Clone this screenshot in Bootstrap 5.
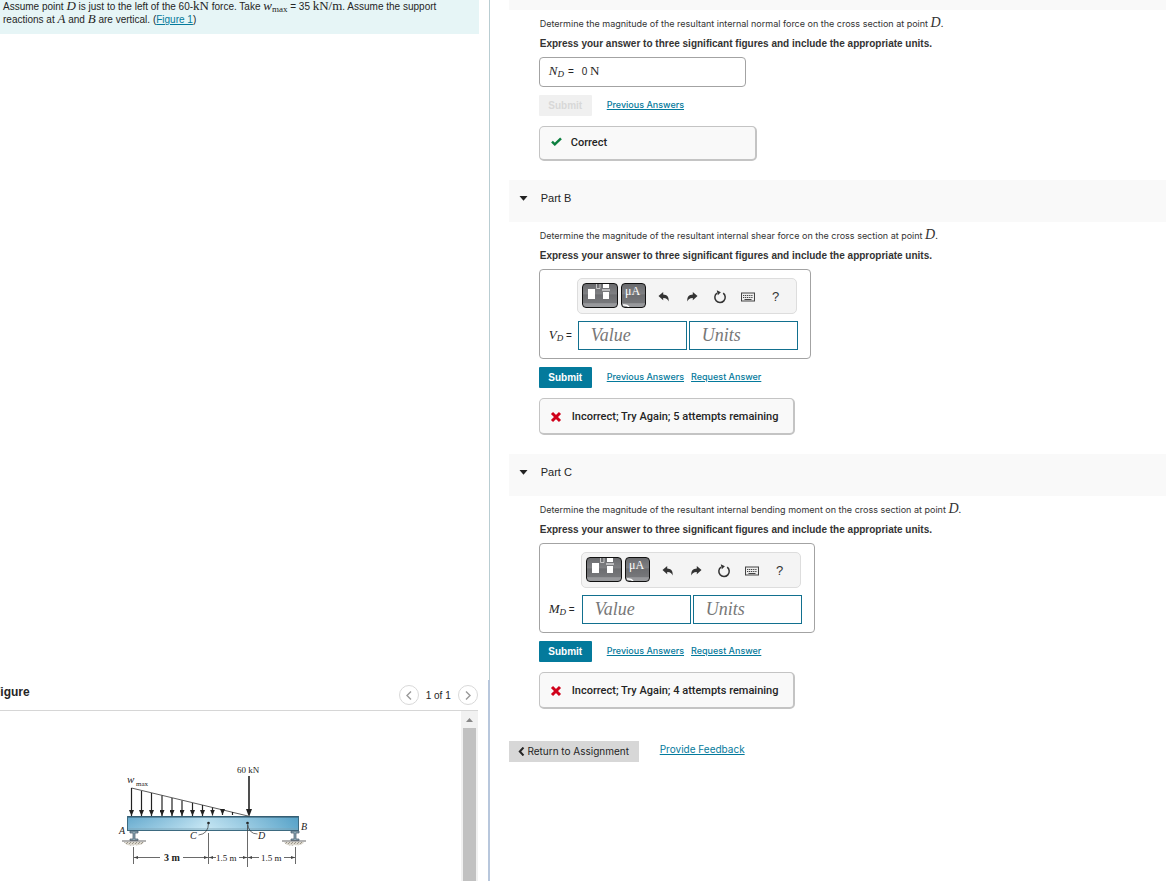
<!DOCTYPE html>
<html lang="en">
<head>
<meta charset="utf-8">
<meta name="viewport" content="width=device-width, initial-scale=1">
<title>Internal Loadings Assignment</title>
<link href="https://cdn.jsdelivr.net/npm/bootstrap@5.3.0/dist/css/bootstrap.min.css" rel="stylesheet">
<style>
  body { font-family: "Liberation Sans", Arial, sans-serif; font-size: 10px; color: #252525; background: #fff; }
  a { color: #047a9c; }
  .math { font-family: "Liberation Serif", "Times New Roman", serif; font-size: 13px; line-height: 0; }
  .math sub { font-size: 9px; bottom: -2px; }

  .left-pane { width: 42%; }
  .problem { background: #e6f5f6; line-height: 13px; padding: 0 0 8px 3px; margin-right: 10px; }
  .pane-edge { border-right: 1px solid #b9cdd2; }
  .figure-panel { border-right: 2px solid #b8c7dc; }
  .figure-head { height: 30px; padding-right: 10px; }
  .figure-title { font-size: 12px; font-weight: 700; margin: 0 0 7px -7px; line-height: 16px; }
  .pager { gap: 7px; }
  .pager-btn { width: 20px; height: 20px; border: 1px solid #d9d9d9; border-radius: 50%; background: #fff; color: #999; padding: 0; }
  .figure-body { height: 171px; border-top: 1px solid #d6d6d6; margin-right: 10px; overflow: hidden; }
  .beam-drawing { margin: 44px 0 0 100px; flex: none; }
  .scroll-track { width: 17px; background: #f1f1f1; }
  .scroll-thumb { width: 13px; background: #c1c1c1; }
  .scroll-arrow { height: 17px; }

  .right-pane { padding-left: 19px; }
  .part-head { background: #f9f9f9; height: 42px; font-size: 11px; padding: 0 0 5px 10px; margin: 0; font-weight: 400; gap: 13px; }
  .part-head.cut { height: 10px; }
  .part-body { padding: 4px 0 19px 30px; }
  .question { font-family: Inter, "Liberation Sans", sans-serif; font-size: 9px; line-height: 20px; height: 20px; margin: 0 0 0 1px; white-space: nowrap; color: #333; }
  .question .math { font-size: 14px; }
  .instruct { font-weight: 700; line-height: 20px; margin: 0 0 3px 1px; color: #333; }
  .frame { border: 1px solid #a3a3a3; border-radius: 4px; background: #fff; }
  .frame.done { width: 207px; height: 30px; padding: 0 0 2px 9px; gap: 4px; }
  .frame.entry { width: fit-content; padding: 8px 12px 8px 9px; gap: 7px; }
  .row-label { width: 29px; }
  .row-label.wide { width: 33px; }
  .toolbar { width: 220px; height: 36px; border: 1px solid #ddd; border-radius: 5px; background: #f4f4f4; padding: 0 0 2px 4px; gap: 3px; align-self: flex-end; margin-right: 1px; }
  .key-btn { height: 25px; border: 1px solid #111; border-radius: 4px; color: #fff; padding: 0; overflow: hidden;
    background: linear-gradient(#6a6b6e 0, #808184 45%, #6c6d70 46%, #77787b 84%, #98999c 85%); }
  .key-btn svg { display: block; }
  .tools { margin-left: 1px; }
  .tool-btn { width: 28px; height: 28px; border: 0; background: none; padding: 3px 0 0; color: #333; font-size: 13px; }
  .answer-box { width: 109px; height: 29px; border: 1px solid #12708f; border-radius: 0; padding: 0 12px; background: #fff;
    font-family: "Liberation Serif", "Times New Roman", serif; font-size: 18px; font-style: italic; }
  .answer-box::placeholder { color: #777; opacity: 1; }
  .units-box { margin-left: 2px; }
  .actions { margin: 8px 0 10px; }
  .actions a { font-family: Inter, "Liberation Sans", sans-serif; font-size: 9px; font-weight: 500; margin: 0 7px 2px 0; }
  .submit-btn { width: 53px; height: 21px; border: 0; border-radius: 1px; background: #047a9c; color: #fff; font-weight: 700; padding: 0; margin-right: 15px; }
  .submit-btn:disabled { background: #f0f0f0; color: #d8d8d8; }
  .feedback { width: 256px; height: 37px; border: 1px solid #c4c4c4; border-width: 1px 2px 2px 1px; border-radius: 5px; background: #f9f9f9;
    font-family: Roboto, "Liberation Sans", sans-serif; font-size: 11px; font-weight: 500; padding: 2px 0 0 10px; gap: 10px; }
  .feedback.right { width: 218px; height: 35px; padding: 0 0 0 11px; gap: 9px; }
  .page-foot { margin-top: 13px; gap: 21px; font-family: Inter, "Liberation Sans", sans-serif; }
  .return-btn { width: 130px; height: 21px; border: 0; background: #d7d7d7; color: #252525; padding: 0; gap: 2px; }
</style>
</head>
<body>
<svg width="0" height="0" class="position-absolute" aria-hidden="true">
  <defs>
    <symbol id="undo" viewBox="0 0 12 12"><path d="M.5 5 5.200 1v2.400C9 3.500 11.200 5.500 10.600 10.500 9.700 8 8.200 6.800 5.200 6.900v2.300z" fill="currentColor"/></symbol>
    <symbol id="reset" viewBox="0 0 14 14"><path d="M4 3.100A5.200 5.200 0 1 0 10.200 3.200" fill="none" stroke="currentColor" stroke-width="1.500"/><path d="M3.800 .3 7.900 2.200 4.800 5.300z" fill="currentColor"/></symbol>
    <symbol id="keys" viewBox="0 0 14 10"><rect x=".5" y="1" width="13" height="8" fill="#eee" stroke="#444"/><path d="M2 3.500h10M2 5.500h10" stroke="#444" stroke-dasharray="1.200 .7"/><path d="M3.500 7.500h7" stroke="#444"/></symbol>
    <symbol id="cross" viewBox="0 0 12 12"><path d="M2 2 10 10M10 2 2 10" stroke="#d0021b" stroke-width="3"/></symbol>
    <symbol id="template" viewBox="0 0 34 23"><path d="M5 5h7v10H5zM20 8h6v7h-6zM19 5.500h8v1h-8zM20 0h6v4h-6z" fill="#fff"/><path d="M13.500 0v4.500h3.500V0" fill="none" stroke="#ddd" stroke-width=".8"/></symbol>
    <symbol id="caret" viewBox="0 0 8 5"><path d="M0 0h8L4 4.700z" fill="#222"/></symbol>
  </defs>
</svg>

<div class="d-flex min-vh-100">
  <aside class="left-pane d-flex flex-column flex-shrink-0 overflow-hidden">
    <div class="pane-edge flex-grow-1">
      <div class="problem">
        Assume point <i class="math">D</i> is just to the left of the 60-<span class="math">kN</span> force. Take <span class="math"><i>w</i><sub>max</sub></span> = 35 <span class="math">kN/m</span>. Assume the support<br>
        reactions at <i class="math">A</i> and <i class="math">B</i> are vertical. (<a href="#figure">Figure 1</a>)
      </div>
    </div>
    <section class="figure-panel" id="figure">
      <div class="figure-head d-flex justify-content-between align-items-center">
        <h2 class="figure-title">Figure</h2>
        <div class="pager d-flex align-items-center">
          <button class="pager-btn d-flex align-items-center justify-content-center" type="button" aria-label="Previous figure"><svg width="6" height="9" viewBox="0 0 6 9"><path d="M5 .5 1 4.500l4 4" fill="none" stroke="currentColor" stroke-width="1.400"/></svg></button>
          <span>1 of 1</span>
          <button class="pager-btn d-flex align-items-center justify-content-center" type="button" aria-label="Next figure"><svg width="6" height="9" viewBox="0 0 6 9"><path d="M1 .5 5 4.500l-4 4" fill="none" stroke="currentColor" stroke-width="1.400"/></svg></button>
        </div>
      </div>
      <div class="figure-body d-flex justify-content-between">
        <svg class="beam-drawing" width="220" height="120" viewBox="0 0 220 120" role="img" aria-label="Beam with a triangular load and a 60 kN force" font-family="Liberation Serif, serif" font-size="9" fill="#222">
          <defs>
            <linearGradient id="beam" x1="0" x2="0" y1="0" y2="1"><stop offset="0" stop-color="#6fb0d2"/><stop offset="1" stop-color="#b2dcee"/></linearGradient>
            <linearGradient id="sheen" x1="0" x2="1"><stop offset="0" stop-color="#5fa5ca" stop-opacity=".6"/><stop offset=".45" stop-color="#d4eef8" stop-opacity=".7"/><stop offset="1" stop-color="#4d9cc4" stop-opacity=".8"/></linearGradient>
            <pattern id="soil" width="3" height="3" patternUnits="userSpaceOnUse"><path d="M0 0h3v3H0z" fill="#dcd8ce"/><path d="M0 0h1v1H0zM2 1h1v1H2z" fill="#9a958a"/></pattern>
            <marker id="tip" markerUnits="userSpaceOnUse" markerWidth="6" markerHeight="5" refX="6" refY="2.500" orient="auto"><path d="M0 0 6 2.500 0 5z" fill="#222"/></marker>
            <marker id="dim" markerUnits="userSpaceOnUse" markerWidth="4" markerHeight="4" refX="4" refY="2" orient="auto-start-reverse"><path d="M0 .5 4 2 0 3.500z" fill="#444"/></marker>
          </defs>
          <rect x="27.500" y="61.500" width="171" height="14" fill="url(#beam)"/>
          <rect x="27.500" y="61.500" width="171" height="14" fill="url(#sheen)" stroke="#3d6a80"/>
          <path d="M28 62h170" stroke="#2e5266"/><path d="M28 74h170" stroke="#7ba2b4" stroke-width=".8"/>
          <path d="M31.500 33 148 61" fill="none" stroke="#333" stroke-width=".8"/>
          <g stroke="#222" stroke-width="1.200">
            <path d="M31.500 33v28" marker-end="url(#tip)"/><path d="M41.500 36v25" marker-end="url(#tip)"/><path d="M51.500 38v23" marker-end="url(#tip)"/><path d="M62 40.500v20.500" marker-end="url(#tip)"/><path d="M72 43v18" marker-end="url(#tip)"/><path d="M82 45.500v15.500" marker-end="url(#tip)"/><path d="M92.500 48v13" marker-end="url(#tip)"/><path d="M102.500 50v11" marker-end="url(#tip)"/><path d="M112.500 52.500v8" marker-end="url(#tip)"/><path d="M122.500 55v5" marker-end="url(#tip)"/><path d="M132.500 57v3"/>
          </g>
          <path d="M149 21v37" stroke="#222" stroke-width="1.600"/><path d="M146 54h6l-3 8z"/>
          <g fill="#8ba7b3" stroke="#456" stroke-width=".7"><path d="M30 76h8v2h-3v6h3v1.500h-8V84h3v-6h-3zM191 76h8v2h-3v6h3v1.500h-8V84h3v-6h-3z"/></g>
          <path d="M24 87h20q-2 4-9 3-8 2-11-3zM184 87h20q-2 4-9 3-8 2-11-3z" fill="url(#soil)"/>
          <path d="M22 86h24M182 86h24" stroke="#666"/>
          <circle cx="108.500" cy="68" r="1.300"/><circle cx="147.500" cy="68" r="1.300"/>
          <path d="M108.500 68q0 11-10 12M147.500 68q1 11 10 11" fill="none" stroke="#333" stroke-width=".7"/>
          <g stroke="#444" stroke-width=".8"><path d="M33.500 92v17M108.500 78v31M147.500 70v42M195.500 92v17"/>
            <path d="M60 102.500H34" marker-end="url(#dim)"/><path d="M83 102.500h25" marker-end="url(#dim)"/>
            <path d="M116 102.500h-7" marker-end="url(#dim)"/><path d="M139 102.500h8" marker-end="url(#dim)"/>
            <path d="M159 102.500h-11" marker-end="url(#dim)"/><path d="M184 102.500h11" marker-end="url(#dim)"/>
          </g>
          <text x="137" y="18">60 kN</text>
          <text x="27" y="28" font-style="italic" font-size="11">w</text><text x="36" y="31" font-size="7">max</text>
          <g font-style="italic" font-size="10"><text x="19" y="79">A</text><text x="201" y="75">B</text><text x="90" y="84">C</text><text x="158" y="84">D</text></g>
          <text x="64" y="106" font-size="10" font-weight="700">3 m</text><text x="116" y="106">1.5 m</text><text x="161" y="106">1.5 m</text>
        </svg>
        <div class="scroll-track d-flex flex-column align-items-center">
          <div class="scroll-arrow d-flex align-items-center"><svg width="7" height="4" viewBox="0 0 7 4"><path d="M0 4 3.500 0 7 4z" fill="#888"/></svg></div>
          <div class="scroll-thumb flex-grow-1"></div>
        </div>
      </div>
    </section>
  </aside>

  <main class="right-pane flex-grow-1">
    <section>
      <div class="part-head cut"></div>
      <div class="part-body">
        <p class="question">Determine the magnitude of the resultant internal normal force on the cross section at point <i class="math">D</i>.</p>
        <p class="instruct">Express your answer to three significant figures and include the appropriate units.</p>
        <div class="frame done d-flex align-items-center"><span class="math"><i>N<sub>D</sub></i></span><span>=</span><span class="ms-1">0 <span class="math">N</span></span></div>
        <div class="actions d-flex align-items-center">
          <button class="submit-btn" type="submit" disabled>Submit</button>
          <a href="#">Previous Answers</a>
        </div>
        <div class="feedback right d-flex align-items-center">
          <svg class="mb-1" width="11" height="9" viewBox="0 0 11 9"><path d="M1 4.600 3.800 7.300 10 1.300" fill="none" stroke="#0c7f3f" stroke-width="2.500"/></svg>
          <span>Correct</span>
        </div>
      </div>
    </section>

    <section>
      <h2 class="part-head d-flex align-items-center"><svg width="9" height="5"><use href="#caret"/></svg>Part B</h2>
      <div class="part-body">
        <p class="question">Determine the magnitude of the resultant internal shear force on the cross section at point <i class="math">D</i>.</p>
        <p class="instruct">Express your answer to three significant figures and include the appropriate units.</p>
        <form>
          <div class="frame entry d-flex flex-column">
            <div class="toolbar d-flex align-items-center" role="toolbar">
              <button class="key-btn" type="button" aria-label="Templates"><svg width="34" height="23"><use href="#template"/></svg></button>
              <button class="key-btn" type="button" aria-label="Units symbols"><svg width="23" height="23" viewBox="0 0 23 23"><text x="3" y="11" font-family="Liberation Serif, serif" font-size="12" fill="#fff">μA</text><path d="M1 21q4-.5 6 2" fill="none" stroke="#fff" stroke-width="1.500"/></svg></button>
              <div class="tools d-flex">
                <button class="tool-btn" type="button" aria-label="Undo"><svg width="12" height="12"><use href="#undo"/></svg></button>
                <button class="tool-btn" type="button" aria-label="Redo"><svg width="12" height="12" viewBox="0 0 12 12"><use href="#undo" width="12" height="12" transform="matrix(-1 0 0 1 12 0)"/></svg></button>
                <button class="tool-btn" type="button" aria-label="Reset"><svg width="14" height="14"><use href="#reset"/></svg></button>
                <button class="tool-btn" type="button" aria-label="Keyboard"><svg width="14" height="10"><use href="#keys"/></svg></button>
                <button class="tool-btn" type="button" aria-label="Help">?</button>
              </div>
            </div>
            <div class="d-flex align-items-center">
              <label class="row-label" for="valueB"><span class="math"><i>V<sub>D</sub></i></span> =</label>
              <input class="answer-box" id="valueB" placeholder="Value">
              <input class="answer-box units-box" id="unitsB" placeholder="Units" aria-label="Units">
            </div>
          </div>
          <div class="actions d-flex align-items-center">
            <button class="submit-btn" type="button">Submit</button>
            <a href="#">Previous Answers</a><a href="#">Request Answer</a>
          </div>
        </form>
        <div class="feedback d-flex align-items-center"><svg width="12" height="12"><use href="#cross"/></svg><span>Incorrect; Try Again; 5 attempts remaining</span></div>
      </div>
    </section>

    <section>
      <h2 class="part-head d-flex align-items-center"><svg width="9" height="5"><use href="#caret"/></svg>Part C</h2>
      <div class="part-body">
        <p class="question">Determine the magnitude of the resultant internal bending moment on the cross section at point <i class="math">D</i>.</p>
        <p class="instruct">Express your answer to three significant figures and include the appropriate units.</p>
        <form>
          <div class="frame entry d-flex flex-column">
            <div class="toolbar d-flex align-items-center" role="toolbar">
              <button class="key-btn" type="button" aria-label="Templates"><svg width="34" height="23"><use href="#template"/></svg></button>
              <button class="key-btn" type="button" aria-label="Units symbols"><svg width="23" height="23" viewBox="0 0 23 23"><text x="3" y="11" font-family="Liberation Serif, serif" font-size="12" fill="#fff">μA</text><path d="M1 21q4-.5 6 2" fill="none" stroke="#fff" stroke-width="1.500"/></svg></button>
              <div class="tools d-flex">
                <button class="tool-btn" type="button" aria-label="Undo"><svg width="12" height="12"><use href="#undo"/></svg></button>
                <button class="tool-btn" type="button" aria-label="Redo"><svg width="12" height="12" viewBox="0 0 12 12"><use href="#undo" width="12" height="12" transform="matrix(-1 0 0 1 12 0)"/></svg></button>
                <button class="tool-btn" type="button" aria-label="Reset"><svg width="14" height="14"><use href="#reset"/></svg></button>
                <button class="tool-btn" type="button" aria-label="Keyboard"><svg width="14" height="10"><use href="#keys"/></svg></button>
                <button class="tool-btn" type="button" aria-label="Help">?</button>
              </div>
            </div>
            <div class="d-flex align-items-center">
              <label class="row-label wide" for="valueC"><span class="math"><i>M<sub>D</sub></i></span> =</label>
              <input class="answer-box" id="valueC" placeholder="Value">
              <input class="answer-box units-box" id="unitsC" placeholder="Units" aria-label="Units">
            </div>
          </div>
          <div class="actions d-flex align-items-center">
            <button class="submit-btn" type="button">Submit</button>
            <a href="#">Previous Answers</a><a href="#">Request Answer</a>
          </div>
        </form>
        <div class="feedback d-flex align-items-center"><svg width="12" height="12"><use href="#cross"/></svg><span>Incorrect; Try Again; 4 attempts remaining</span></div>
      </div>
    </section>

    <div class="page-foot d-flex align-items-center">
      <button class="return-btn d-flex align-items-center justify-content-center" type="button"><svg width="7" height="9" viewBox="0 0 7 9"><path d="M5.500 .5 1.800 4.500l3.700 4" fill="none" stroke="currentColor" stroke-width="2"/></svg>Return to Assignment</button>
      <a class="mb-1" href="#">Provide Feedback</a>
    </div>
  </main>
</div>
<script src="https://cdn.jsdelivr.net/npm/bootstrap@5.3.0/dist/js/bootstrap.bundle.min.js"></script>
</body>
</html>
